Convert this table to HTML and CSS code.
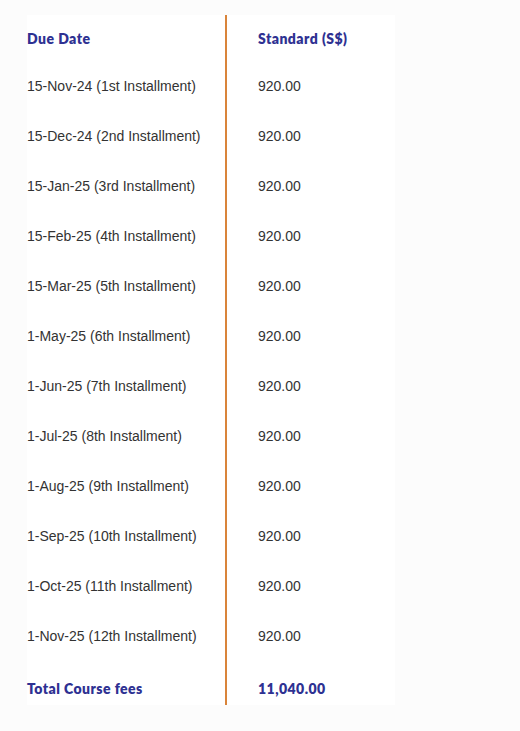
FILE: index.html
```html
<!DOCTYPE html>
<html lang="en">
<head>
<meta charset="utf-8">
<title>Fee schedule</title>
<link rel="stylesheet" href="styles.css">
</head>
<body>
<div class="page">
  <table class="fees">
    <thead>
      <tr class="head-row"><th class="c1">Due Date</th><th class="c2">Standard (S$)</th></tr>
    </thead>
    <tbody>
      <tr><td class="c1">15-Nov-24 (1st Installment)</td><td class="c2">920.00</td></tr>
      <tr><td class="c1">15-Dec-24 (2nd Installment)</td><td class="c2">920.00</td></tr>
      <tr><td class="c1">15-Jan-25 (3rd Installment)</td><td class="c2">920.00</td></tr>
      <tr><td class="c1">15-Feb-25 (4th Installment)</td><td class="c2">920.00</td></tr>
      <tr><td class="c1">15-Mar-25 (5th Installment)</td><td class="c2">920.00</td></tr>
      <tr><td class="c1">1-May-25 (6th Installment)</td><td class="c2">920.00</td></tr>
      <tr><td class="c1">1-Jun-25 (7th Installment)</td><td class="c2">920.00</td></tr>
      <tr><td class="c1">1-Jul-25 (8th Installment)</td><td class="c2">920.00</td></tr>
      <tr><td class="c1">1-Aug-25 (9th Installment)</td><td class="c2">920.00</td></tr>
      <tr><td class="c1">1-Sep-25 (10th Installment)</td><td class="c2">920.00</td></tr>
      <tr><td class="c1">1-Oct-25 (11th Installment)</td><td class="c2">920.00</td></tr>
      <tr><td class="c1">1-Nov-25 (12th Installment)</td><td class="c2">920.00</td></tr>
    </tbody>
    <tfoot>
      <tr class="total-row"><th class="c1">Total Course fees</th><th class="c2">11,040.00</th></tr>
    </tfoot>
  </table>
</div>
</body>
</html>
```
FILE: styles.css
```css
html, body {
  margin: 0;
  padding: 0;
  background: #fcfcfc;
}
.page {
  padding: 15px 0 0 27px;
}
.fees {
  border-collapse: collapse;
  background: #ffffff;
  width: 368px;
  font-family: "Liberation Sans", Arial, sans-serif;
}
.fees th, .fees td {
  padding: 0;
  text-align: left;
  vertical-align: top;
}
.fees .c1 {
  width: 199px;
  border-right: 2px solid #d9843a;
}
.fees .c2 {
  padding-left: 31px;
}
.fees .head-row th {
  height: 46px;
  padding-top: 15px;
  box-sizing: border-box;
  font-family: "Lato", sans-serif;
  font-weight: 800;
  font-size: 14px;
  letter-spacing: 0.45px;
  color: #2e3192;
}
.fees tbody td {
  height: 50px;
  box-sizing: border-box;
  padding-top: 17px;
  font-size: 14px;
  color: #333333;
}
.fees .total-row th {
  height: 44px;
  box-sizing: border-box;
  padding-top: 19px;
  font-family: "Lato", sans-serif;
  font-weight: 800;
  font-size: 14px;
  letter-spacing: 0.45px;
  color: #2e3192;
}
```
